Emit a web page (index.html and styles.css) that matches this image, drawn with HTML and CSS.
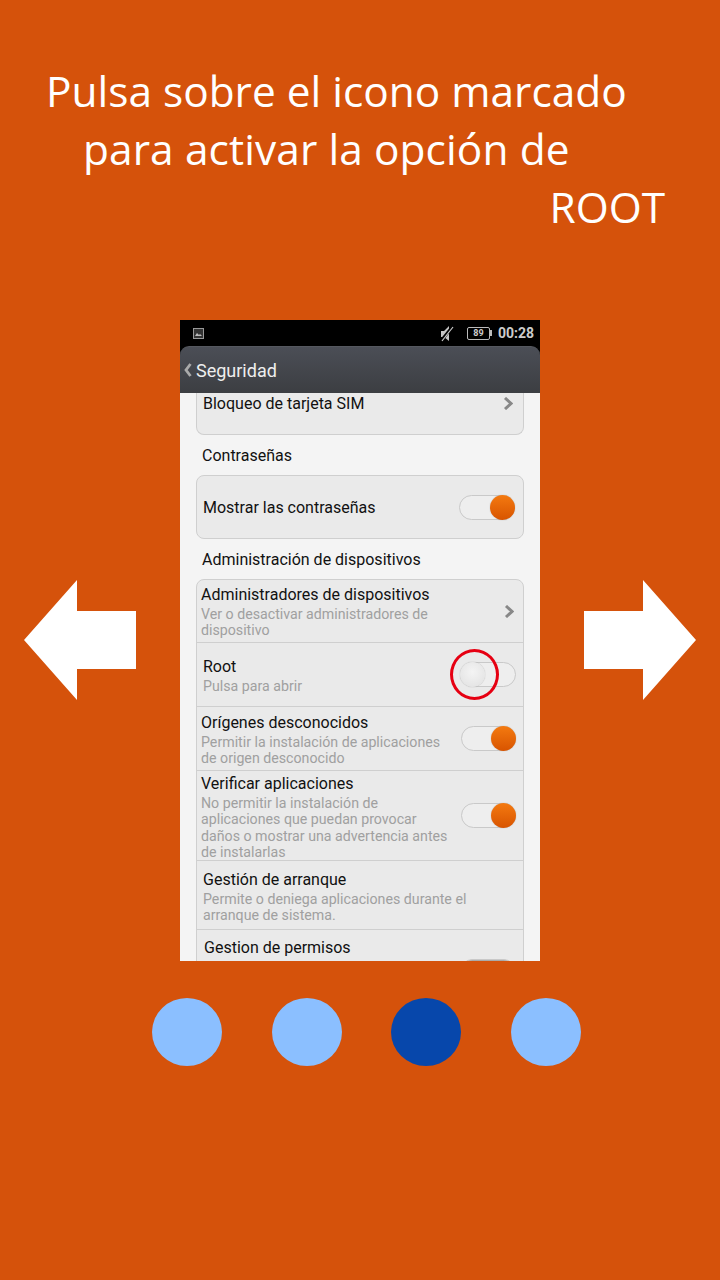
FILE: index.html
```html
<!DOCTYPE html>
<html lang="es">
<head>
  <meta charset="UTF-8">
  <meta name="viewport" content="width=device-width, initial-scale=1.0">
  <title>Activar ROOT</title>
  <link rel="stylesheet" href="styles.css">
</head>
<body>

<header class="headline">
  <p class="line line-1">Pulsa sobre el icono marcado</p>
  <p class="line line-2">para activar la opción de</p>
  <p class="line line-3">ROOT</p>
</header>

<section class="slider">
  <svg class="arrow" width="112" height="120" viewBox="0 0 112 120"><polygon points="0,60 53,0 53,31 112,31 112,89 53,89 53,120"/></svg>

  <div class="phone">
    <div class="statusbar">
      <svg class="st-img" width="11" height="11" viewBox="0 0 11 11"><rect x="0.5" y="0.5" width="10" height="10" fill="#333" stroke="#999"/><path d="M2 8l2-3 2 2 1-1 2 2z" fill="#bbb"/></svg>
      <svg class="st-mute" width="14" height="17" viewBox="0 0 14 17"><path d="M1 6h3l5-5v15l-5-4H1z" fill="#c4c4c4"/><path d="M1 16L13 1" stroke="#000" stroke-width="3"/><path d="M2 16L13 2" stroke="#ccc" stroke-width="1.2"/></svg>
      <span class="battery"><span class="battery-num">89</span></span>
      <span class="battery-tip"></span>
      <span class="clock">00:28</span>
    </div>
    <div class="titlebar">
      <svg class="back" width="8" height="14" viewBox="0 0 8 14"><path d="M6.5 1L2 7l4.5 6" fill="none" stroke="#aaa" stroke-width="2.8"/></svg>
      <span>Seguridad</span>
    </div>

    <div class="content">
      <div class="card card-top">
        <div class="row h-41 pt-1">
          <div class="text"><div class="title">Bloqueo de tarjeta SIM</div></div>
          <svg class="chev chev-top" width="10" height="13" viewBox="0 0 10 13"><path d="M2 1l6 5.5-6 5.5" fill="none" stroke="#888" stroke-width="3"/></svg>
        </div>
      </div>

      <h2 class="group">Contraseñas</h2>

      <div class="card">
        <div class="row h-62 center">
          <div class="text"><div class="title">Mostrar las contraseñas</div></div>
          <span class="switch on sw-mostrar"><span class="knob"></span></span>
        </div>
      </div>

      <h2 class="group">Administración de dispositivos</h2>

      <div class="card">
        <div class="row h-63 pt-5 in-4">
          <div class="text">
            <div class="title">Administradores de dispositivos</div>
            <div class="sub">Ver o desactivar administradores de<br>dispositivo</div>
          </div>
          <svg class="chev" width="10" height="13" viewBox="0 0 10 13"><path d="M2 1l6 5.5-6 5.5" fill="none" stroke="#888" stroke-width="3"/></svg>
        </div>
        <div class="row h-64 pt-14">
          <div class="text">
            <div class="title">Root</div>
            <div class="sub">Pulsa para abrir</div>
          </div>
          <span class="switch"><span class="knob"></span></span>
          <span class="marker"></span>
        </div>
        <div class="row h-64 pt-6 in-4">
          <div class="text">
            <div class="title">Orígenes desconocidos</div>
            <div class="sub">Permitir la instalación de aplicaciones<br>de origen desconocido</div>
          </div>
          <span class="switch on narrow"><span class="knob"></span></span>
        </div>
        <div class="row h-90 pt-3 in-4">
          <div class="text">
            <div class="title">Verificar aplicaciones</div>
            <div class="sub">No permitir la instalación de<br>aplicaciones que puedan provocar<br>daños o mostrar una advertencia antes<br>de instalarlas</div>
          </div>
          <span class="switch on narrow"><span class="knob"></span></span>
        </div>
        <div class="row h-69 pt-9">
          <div class="text">
            <div class="title">Gestión de arranque</div>
            <div class="sub">Permite o deniega aplicaciones durante el<br>arranque de sistema.</div>
          </div>
        </div>
        <div class="row h-40 pt-8 in-7">
          <div class="text"><div class="title">Gestion de permisos</div></div>
          <span class="switch peek"></span>
        </div>
      </div>
    </div>
  </div>

  <svg class="arrow" width="112" height="120" viewBox="0 0 112 120"><polygon points="112,60 59,0 59,31 0,31 0,89 59,89 59,120"/></svg>
</section>

<nav class="dots">
  <span class="dot"></span>
  <span class="dot"></span>
  <span class="dot active"></span>
  <span class="dot"></span>
</nav>

</body>
</html>
```

FILE: styles.css
```css
body {
  margin: 0;
  height: 1280px;
  overflow: hidden;
  background-color: #d5520b;
  font-family: Roboto, sans-serif;
}

/* titulo */
.headline {
  padding-top: 62px;
  height: 175px;
  margin-bottom: 83px;
  color: #fff;
  font-family: "Open Sans", sans-serif;
  font-size: 42.4px;
  line-height: 58px;
}
.line {
  margin: 0;
  white-space: nowrap;
}
.line-1 { padding-left: 46px; }
.line-2 { padding-left: 83px; letter-spacing: 0.1px; }
.line-3 { padding-right: 55px; text-align: right; }

/* flechas + telefono */
.slider {
  display: flex;
  justify-content: space-between;
  align-items: center;
  padding: 0 24px;
}
.arrow {
  margin-bottom: 1px;
  fill: #fff;
}
.phone {
  display: flex;
  flex-direction: column;
  width: 360px;
  height: 641px;
  overflow: hidden;
  background-color: #000;
}

.statusbar {
  display: flex;
  flex: none;
  align-items: center;
  height: 26px;
  padding: 0 6px 0 13px;
  color: #ccc;
}
.st-mute {
  margin-left: auto;
  margin-right: 13px;
}
.battery {
  display: flex;
  align-items: center;
  justify-content: center;
  box-sizing: border-box;
  width: 23px;
  height: 13px;
  border: 1px solid #bbb;
  border-radius: 2px;
}
.battery-num {
  font-size: 9px;
  font-weight: 700;
}
.battery-tip {
  width: 2px;
  height: 6px;
  margin-right: 6px;
  background-color: #bbb;
}
.clock {
  font-size: 14px;
  font-weight: 700;
}

.titlebar {
  display: flex;
  flex: none;
  align-items: center;
  gap: 4px;
  box-sizing: border-box;
  height: 47px;
  padding-left: 4px;
  border-radius: 9px 9px 0 0;
  border-top: 1px solid #55585f;
  background: linear-gradient(#4b4e56, #3c3e42);
  color: #eee;
  font-size: 18px;
}

.content {
  flex: 1;
  padding: 0 16px;
  background-color: #f4f4f4;
}
.card {
  box-sizing: border-box;
  border: 1px solid #cfcfcf;
  border-radius: 8px;
  background-color: #eaeaea;
}
.card-top {
  border-top: 0;
  border-radius: 0 0 8px 8px;
}
.group {
  margin: 0;
  height: 40px;
  padding-left: 6px;
  font-size: 16px;
  font-weight: 400;
  line-height: 41px;
  color: #111;
}

.row {
  display: flex;
  align-items: center;
  position: relative;
  box-sizing: border-box;
  padding: 0 7px 0 6px;
  border-bottom: 1px solid #cfcfcf;
}
.row:last-child { border-bottom: 0; }
.in-4 { padding-left: 4px; }
.in-7 { padding-left: 7px; }
.h-41 { height: 41px; }
.h-62 { height: 62px; }
.h-63 { height: 63px; }
.h-64 { height: 64px; }
.h-90 { height: 90px; }
.h-69 { height: 69px; }
.h-40 { height: 40px; }

.text {
  flex: 1;
  align-self: flex-start;
}
.center .text { align-self: center; padding-top: 2px; }
.pt-1 .text { padding-top: 1px; }
.pt-3 .text { padding-top: 3px; }
.pt-5 .text { padding-top: 5px; }
.pt-6 .text { padding-top: 6px; }
.pt-8 .text { padding-top: 8px; }
.pt-9 .text { padding-top: 9px; }
.pt-14 .text { padding-top: 14px; }

.title {
  font-size: 16px;
  line-height: 20px;
  color: #111;
  white-space: nowrap;
}
.sub {
  margin-top: 1px;
  font-size: 14.2px;
  line-height: 16.4px;
  color: #a0a0a0;
  white-space: nowrap;
}

.chev {
  margin-right: 2px;
}
.chev-top {
  align-self: flex-start;
  margin-top: 4px;
  margin-right: 3px;
}

.switch {
  position: relative;
  flex: none;
  box-sizing: border-box;
  width: 56px;
  height: 25px;
  border: 1px solid #c9c9c9;
  border-radius: 13px;
  background-color: #eee;
}
.narrow { width: 55px; }
.sw-mostrar { margin-right: 1px; }
.knob {
  position: absolute;
  top: -1px;
  left: -1px;
  width: 25px;
  height: 25px;
  border-radius: 50%;
  background: radial-gradient(circle at 50% 40%, #f4f4f4, #e0e0e0);
  box-shadow: 0 0 1px #999;
}
.on .knob {
  left: auto;
  right: -1px;
  background: linear-gradient(#f47a10, #d85400);
}
.peek {
  align-self: flex-start;
  margin-top: 29px;
  background-color: #aaa;
}

/* circulo rojo sobre el switch */
.marker {
  position: absolute;
  top: 6px;
  right: 24px;
  box-sizing: border-box;
  width: 49px;
  height: 51px;
  border: 3px solid #e60012;
  border-radius: 50%;
}

.dots {
  display: flex;
  gap: 49.67px;
  margin-top: 37px;
  padding-left: 152px;
}
.dot {
  width: 70px;
  height: 68px;
  border-radius: 50%;
  background-color: #8bbfff;
}
.active {
  background-color: #0747ab;
}
```
